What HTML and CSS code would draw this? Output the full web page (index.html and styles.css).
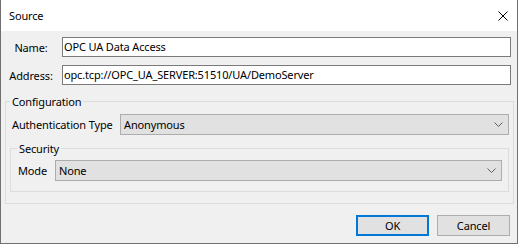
FILE: index.html
```html
<!DOCTYPE html>
<html lang="en">
<head>
    <meta charset="UTF-8">
    <title>Source</title>
    <link rel="stylesheet" href="styles.css">
</head>
<body>
    <div class="dialog">
        <div class="titlebar">
            <span class="title">Source</span>
            <svg class="close" width="10" height="10" viewBox="0 0 10 10">
                <path d="M0.5 0.5 L9.5 9.5 M9.5 0.5 L0.5 9.5" stroke="#000" stroke-width="1" fill="none"/>
            </svg>
        </div>
        <div class="content">
            <div class="field">
                <span class="field-label">Name:</span>
                <div class="textbox">OPC UA Data Access</div>
            </div>
            <div class="field">
                <span class="field-label">Address:</span>
                <div class="textbox">opc.tcp://OPC_UA_SERVER:51510/UA/DemoServer</div>
            </div>

            <fieldset class="group group-config">
                <legend>Configuration</legend>
                <div class="combo-row row-auth">
                    <span class="combo-label">Authentication Type</span>
                    <div class="combo">
                        <span>Anonymous</span>
                        <svg class="chevron" width="9" height="5" viewBox="0 0 9 5"><polyline points="0.5,0.5 4.5,4.5 8.5,0.5" fill="none" stroke="#606060" stroke-width="1"/></svg>
                    </div>
                </div>
                <fieldset class="group group-security">
                    <legend>Security</legend>
                    <div class="combo-row row-mode">
                        <span class="combo-label">Mode</span>
                        <div class="combo">
                            <span>None</span>
                            <svg class="chevron" width="9" height="5" viewBox="0 0 9 5"><polyline points="0.5,0.5 4.5,4.5 8.5,0.5" fill="none" stroke="#606060" stroke-width="1"/></svg>
                        </div>
                    </div>
                </fieldset>
            </fieldset>
        </div>
        <div class="actions">
            <button class="btn btn-default">OK</button>
            <button class="btn">Cancel</button>
        </div>
    </div>
</body>
</html>
```

FILE: styles.css
```css
* {
    margin: 0;
    padding: 0;
    box-sizing: border-box;
}
body {
    font-family: 'Noto Sans', 'Open Sans', sans-serif;
    font-size: 11px;
    letter-spacing: -0.15px;
    line-height: 15px;
    color: #000;
    background: #fff;
}
.dialog {
    width: 518px;
    height: 244px;
    display: flex;
    flex-direction: column;
    background-color: #f0f0f0;
    border: 1px solid #707070;
    border-top: none;
    white-space: nowrap;
}
.titlebar {
    height: 31px;
    flex: 0 0 31px;
    display: flex;
    align-items: center;
    justify-content: space-between;
    background-color: #fff;
    padding: 0 9px 0 8px;
}
.content {
    padding: 6px 3px 0 3px;
}
.field {
    display: grid;
    grid-template-columns: 46px 1fr;
    column-gap: 8px;
    align-items: center;
    padding: 0 3px 0 4px;
    margin-bottom: 8px;
}
.field-label {
    text-align: center;
}
.textbox {
    height: 20px;
    border: 1px solid #7a7a7a;
    background-color: #fff;
    padding: 1px 1px 0 1px;
    overflow: hidden;
}
.group {
    border: 1px solid #dcdcdc;
    min-width: 0;
}
.group legend {
    padding: 0 2px;
    line-height: 15px;
}
.group-config {
    margin: 9px 0 0 1px;
    padding: 0 4px 11px 4px;
}
.group-security {
    margin-top: 6px;
    padding: 0 6px 10px 6px;
}
.combo-row {
    display: flex;
    align-items: center;
}
.row-auth {
    margin-top: 5px;
    padding-left: 2px;
}
.row-auth .combo-label {
    width: 108px;
}
.row-mode {
    margin-top: 4px;
    padding-left: 1px;
}
.row-mode .combo-label {
    width: 37px;
}
.combo {
    flex: 1;
    height: 21px;
    display: flex;
    align-items: center;
    justify-content: space-between;
    background-color: #e1e1e1;
    border: 1px solid #adadad;
    padding: 0 5px 0 3px;
}
.actions {
    display: flex;
    justify-content: flex-end;
    gap: 8px;
    padding: 11px 7px 0 0;
}
.btn {
    width: 73px;
    height: 21px;
    font-family: inherit;
    font-size: 11px;
    letter-spacing: -0.15px;
    color: #000;
    background-color: #e1e1e1;
    border: 1px solid #adadad;
}
.btn-default {
    border: 2px solid #0078d7;
}
```
